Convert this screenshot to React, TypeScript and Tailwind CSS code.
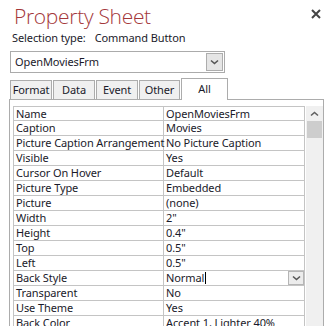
const ROWS: [string, string][] = [
  ['Name', 'OpenMoviesFrm'],
  ['Caption', 'Movies'],
  ['Picture Caption Arrangement', 'No Picture Caption'],
  ['Visible', 'Yes'],
  ['Cursor On Hover', 'Default'],
  ['Picture Type', 'Embedded'],
  ['Picture', '(none)'],
  ['Width', '2"'],
  ['Height', '0.4"'],
  ['Top', '0.5"'],
  ['Left', '0.5"'],
  ['Back Style', 'Normal'],
  ['Transparent', 'No'],
  ['Use Theme', 'Yes'],
  ['Back Color', 'Accent 1, Lighter 40%'],
]

const TABS = [
  { label: 'Format', w: 'w-[42px]' },
  { label: 'Data', w: 'w-[42px]' },
  { label: 'Event', w: 'w-[42px]' },
  { label: 'Other', w: 'w-[41px]' },
]

const Chevron = ({ className }: { className?: string }) => (
  <svg width="9" height="6" viewBox="0 0 9 6" className={className}>
    <path d="M1 1.5 L4.5 4.5 L8 1.5" fill="none" stroke="#555" strokeWidth="1.6" />
  </svg>
)

export default function App() {
  return (
    <div className="relative h-[326px] w-[330px] overflow-hidden bg-white font-['Segoe_UI','Noto_Sans',sans-serif] text-[11px] tracking-[-0.1px] text-[#1a1a2a]">
      {/* header */}
      <div className="flex items-start justify-between pl-[14px] pr-[9px] pt-[1px]">
        <h1 className="font-['Open_Sans',sans-serif] text-[21px] font-light leading-[30px] tracking-[-0.3px] text-[#a4373a]">
          Property Sheet
        </h1>
        <button type="button" aria-label="Close" className="mt-[8px] p-0">
          <svg width="10" height="10" viewBox="0 0 10 10">
            <path d="M1 1 L9 9 M9 1 L1 9" stroke="#444" strokeWidth="2" />
          </svg>
        </button>
      </div>

      <div className="mt-[-1px] flex pl-[12px] leading-[16px]">
        <span>Selection type:</span>
        <span className="ml-[9px]">Command Button</span>
      </div>

      {/* object selector */}
      <div className="ml-[10px] mt-[5px] flex h-[22px] w-[215px] items-center justify-between border border-[#ababab] pl-[4px] pr-[1px]">
        <span className="leading-[16px]">OpenMoviesFrm</span>
        <div className="flex h-[18px] w-[17px] items-center justify-center border border-[#adadad] bg-[#e5e5e5]">
          <Chevron />
        </div>
      </div>

      {/* tabs */}
      <div className="relative z-10 ml-[10px] mt-[5px] flex h-[21px] items-end gap-[1px]">
        {TABS.map((t) => (
          <div
            key={t.label}
            className={`flex h-[19px] ${t.w} items-center justify-center border border-b-0 border-[#acacac] bg-[#f0f0f0] leading-[16px]`}
          >
            {t.label}
          </div>
        ))}
        <div className="mb-[-1px] flex h-[22px] w-[47px] items-start justify-center border border-b-0 border-[#acacac] bg-white pt-[2px] leading-[16px]">
          All
        </div>
      </div>

      {/* panel */}
      <div className="ml-[9px] h-[240px] w-[315px] border border-b-0 border-[#acacac] pl-[3px] pt-[6px]">
        <div className="flex">
          <div className="w-[292px] border border-b-0 border-[#c4c4c4]">
            {ROWS.map(([k, v], i) => (
              <div
                key={k}
                className={`flex ${i === 0 ? 'h-[14px]' : 'h-[15px]'} items-center border-b border-[#c4c4c4] leading-[14px]`}
              >
                <div className="flex w-[150px] shrink-0 items-center self-stretch whitespace-nowrap border-r border-[#c4c4c4] pl-[2px]">
                  {k}
                </div>
                <div className="flex flex-1 items-center justify-between self-stretch whitespace-nowrap pl-[2px]">
                  {k === 'Back Style' ? (
                    <>
                      <span className="flex items-center">
                        {v}
                        <span className="ml-[1px] inline-block h-[12px] w-[1px] bg-black" />
                      </span>
                      <span className="flex h-[14px] w-[16px] items-center justify-center border border-[#b5b5b5] bg-[#ececec]">
                        <Chevron />
                      </span>
                    </>
                  ) : (
                    <span>{v}</span>
                  )}
                </div>
              </div>
            ))}
          </div>
          {/* scrollbar */}
          <div className="ml-[1px] flex w-[17px] flex-col items-center bg-[#f0f0f0]">
            <svg width="9" height="6" viewBox="0 0 9 6" className="mt-[5px]">
              <path d="M1 4.5 L4.5 1.5 L8 4.5" fill="none" stroke="#606060" strokeWidth="1.6" />
            </svg>
            <div className="mt-[4px] h-[17px] w-[15px] bg-[#cdcdcd]" />
          </div>
        </div>
      </div>
    </div>
  )
}
